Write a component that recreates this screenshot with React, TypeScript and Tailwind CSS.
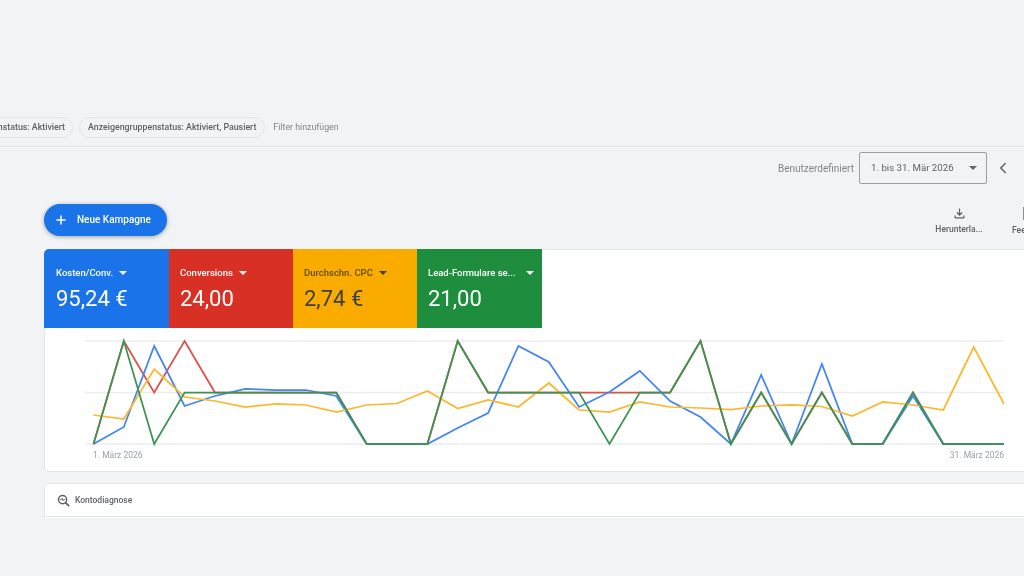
import { ChevronLeft, Plus } from "lucide-react";

const font = { fontFamily: "Roboto, sans-serif" };

const TILES = [
  { label: "Kosten/Conv.", value: "95,24 €", bg: "w-[125px] pl-[12px] bg-[#1a73e8] rounded-tl-[5px]", text: "text-white", sub: "text-white" },
  { label: "Conversions", value: "24,00", bg: "w-[124px] pl-[11px] bg-[#d93025]", text: "text-white", sub: "text-white" },
  { label: "Durchschn. CPC", value: "2,74 €", bg: "w-[124px] pl-[11px] bg-[#f9ab00]", text: "text-[#3c4043]", sub: "text-[#5f4b10]" },
  { label: "Lead-Formulare se...", value: "21,00", bg: "w-[125px] pl-[11px] bg-[#1e8e3e]", text: "text-white", sub: "text-white", wide: true },
];

const BLUE = [444, 427, 346, 406, 396, 389, 390, 390, 396, 444, 444, 444, 428, 413, 346, 362, 407, 392, 371, 401, 417, 444, 375, 444, 364, 444, 444, 396, 444, 444, 444];
const RED = [444, 341, 392.5, 341, 392.5, 392.5, 392.5, 392.5, 392.5, 444, 444, 444, 341, 392.5, 392.5, 392.5, 392.5, 392.5, 392.5, 392.5, 341, 444, 392.5, 444, 392.5, 444, 444, 392.5, 444, 444, 444];
const YELLOW = [415, 419, 369, 397, 401, 407, 404, 405, 412, 405, 403.5, 391, 408.5, 400, 407, 383, 410, 412, 402, 407, 408, 409.5, 406, 405, 406.5, 416, 402, 405, 410, 347, 404];
const GREEN = [444, 341, 444, 392.5, 392.5, 392.5, 392.5, 392.5, 392.5, 444, 444, 444, 341, 392.5, 392.5, 392.5, 392.5, 444, 392.5, 392.5, 341, 444, 392.5, 444, 392.5, 444, 444, 392.5, 444, 444, 444];

// chart svg starts at page x=45, y=328
const pts = (ys: number[]) =>
  ys.map((y, i) => `${(93.5 + i * 30.35 - 45).toFixed(1)},${y - 328}`).join(" ");

const Caret = ({ className }: { className: string }) => (
  <svg viewBox="0 0 8 4" className={`w-[8px] h-[4px] ${className}`} fill="currentColor">
    <path d="M0 0h8L4 4z" />
  </svg>
);

const App = () => {
  return (
    <div style={font} className="w-[1024px] h-[576px] overflow-hidden bg-[#f1f3f4] text-[#5f6368] blur-[0.5px]">
      {/* Filters */}
      <div className="h-[147px] pt-[117px] border-b border-[#e4e6e8]">
        <div className="flex items-center gap-[6px] -ml-[61px] text-[8.8px] font-medium">
          <span className="h-[21px] flex items-center px-[7px] rounded-full border border-[#e3e5e8] whitespace-nowrap w-[134px] justify-end">
            Kampagnenstatus: Aktiviert
          </span>
          <span className="h-[21px] flex items-center px-[8px] rounded-full border border-[#e3e5e8] whitespace-nowrap">
            Anzeigengruppenstatus: Aktiviert, Pausiert
          </span>
          <span className="ml-[2px] text-[#80868b] font-normal whitespace-nowrap">Filter hinzufügen</span>
        </div>
      </div>

      {/* Date range */}
      <div className="flex items-center justify-end h-[32px] mt-[5px] whitespace-nowrap">
        <span className="text-[10px] text-[#80868b] mr-[5px]">Benutzerdefiniert</span>
        <div className="w-[128px] h-[32px] flex items-center justify-between pl-[11px] pr-[9px] rounded-[2px] border border-[#9aa0a6] text-[9.7px]">
          1. bis 31. Mär 2026
          <Caret className="text-[#5f6368]" />
        </div>
        <ChevronLeft className="w-[18px] h-[18px] ml-[7px] mr-[12px] text-[#5f6368]" strokeWidth={2} />
      </div>

      {/* Toolbar */}
      <div className="flex items-start justify-between h-[45px] mt-[20px] ml-[44px]">
        <button className="w-[123px] h-[32px] pb-px flex items-center gap-[9px] pl-[10px] rounded-full bg-[#1a73e8] text-white text-[10px] font-medium shadow-[0_1px_4px_rgba(60,64,67,0.45)]">
          <Plus className="w-[14px] h-[14px]" strokeWidth={2.5} />
          Neue Kampagne
        </button>
        <div className="flex -mr-[12px] text-[8.5px] font-medium text-[#5f6368]">
          <div className="flex flex-col items-center w-[50px] gap-[2px] mt-[2px]">
            <svg viewBox="0 0 24 24" className="w-[15px] h-[15px]" fill="currentColor">
              <path d="M12 16l-5-5 1.4-1.45 2.6 2.6V4h2v8.15l2.6-2.6L17 11l-5 5zM6 20c-.55 0-1.02-.2-1.41-.59C4.2 19.02 4 18.55 4 18v-3h2v3h12v-3h2v3c0 .55-.2 1.02-.59 1.41-.39.39-.86.59-1.41.59H6z" />
            </svg>
            Herunterla...
          </div>
          <div className="flex flex-col items-start w-[24px] ml-[28px] gap-[4px] mt-[3px] overflow-hidden">
            <span className="block h-[13px] w-[2px] bg-[#8c9095] ml-[11px]" />
            Feedback
          </div>
        </div>
      </div>

      {/* Chart card */}
      <div className="ml-[44px] -mr-[20px] h-[223px] bg-white rounded-[5px] border border-[#e3e5e8]">
        <div className="flex h-[79px] -mt-px -ml-px">
          {TILES.map((t) => (
            <div key={t.label} className={`pr-[10px] pt-[17px] ${t.bg}`}>
              <div className={`flex items-center text-[9.5px] font-medium whitespace-nowrap ${t.wide ? "justify-between -mr-[2px]" : "gap-[6px]"} ${t.sub}`}>
                {t.label}
                <Caret className={t.text} />
              </div>
              <div className={`mt-[6px] text-[22px] leading-[26px] ${t.text}`}>{t.value}</div>
            </div>
          ))}
        </div>
        <svg width="979" height="122" className="block" fill="none">
          {[13, 64.5, 116].map((y) => (
            <line key={y} x1="40" x2="959" y1={y} y2={y} stroke="#ececec" strokeWidth="1.5" />
          ))}
          <polyline points={pts(RED)} stroke="#d9534c" strokeWidth="1.75" />
          <polyline points={pts(BLUE)} stroke="#4285f4" strokeWidth="1.75" />
          <polyline points={pts(YELLOW)} stroke="#fbb82e" strokeWidth="1.75" />
          <polyline points={pts(GREEN)} stroke="#3c9450" strokeWidth="1.75" />
        </svg>
        <div className="flex justify-between w-[959px] pl-[48px] text-[8.5px] text-[#9aa0a6] leading-[10px]">
          <span>1. März 2026</span>
          <span>31. März 2026</span>
        </div>
      </div>

      {/* Diagnose */}
      <div className="ml-[44px] -mr-[20px] mt-[11px] h-[35px] overflow-hidden">
        <div className="h-[60px] bg-white rounded-[5px] border border-[#e3e5e8]">
          <div className="h-[33px] flex items-center gap-[5px] pl-[12px] border-b border-[#e3e5e8] text-[8.5px] font-medium">
            <svg viewBox="0 0 14 14" className="w-[13px] h-[13px]" fill="none" stroke="#5f6368" strokeWidth="1.6">
              <circle cx="6" cy="6" r="4.4" />
              <path d="M9.2 9.2 13 13" strokeWidth="2" />
              <path d="M3.2 6h1.6l.8-1.4 1 2.6.7-1.2h1.4" strokeWidth="1" />
            </svg>
            Kontodiagnose
          </div>
        </div>
      </div>
    </div>
  );
};

export default App;
